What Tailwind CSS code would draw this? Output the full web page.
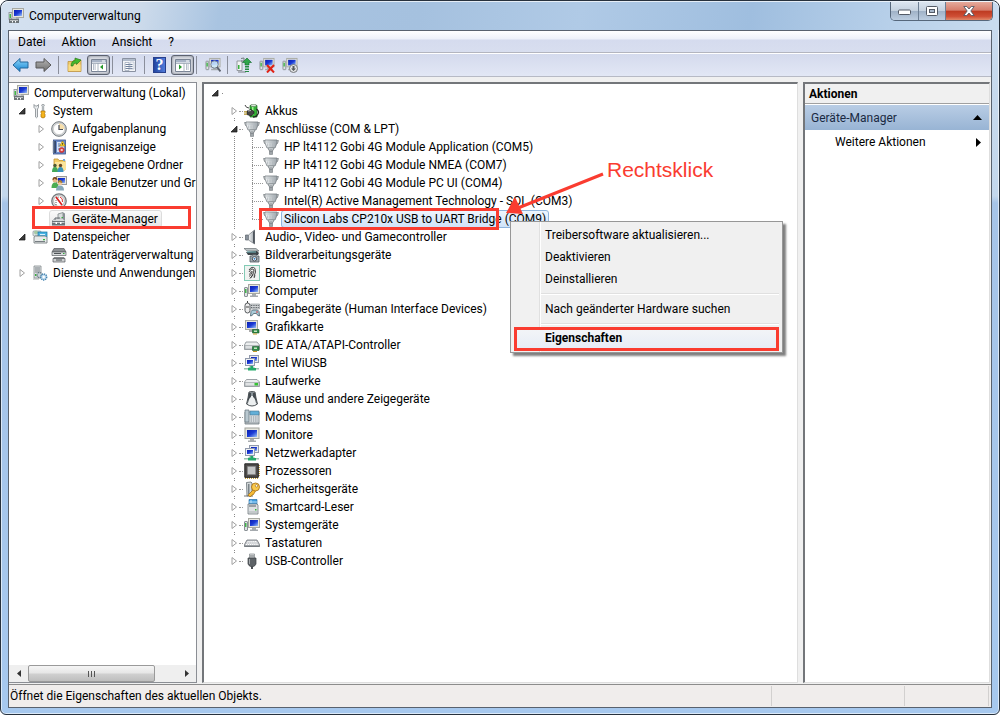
<!DOCTYPE html>
<html lang="de">
<head>
<meta charset="utf-8">
<meta name="viewport" content="width=device-width, initial-scale=1">
<title>Computerverwaltung</title>
<script src="https://cdn.jsdelivr.net/npm/@tailwindcss/browser@4"></script>
</head>
<body class="bg-white">

<svg class="absolute h-0 w-0" aria-hidden="true">
  <defs>
    <linearGradient id="screen" x1="0" y1="0" x2="1" y2="1"><stop offset="0" stop-color="#0a1fb0"/><stop offset=".5" stop-color="#1b3bd6"/><stop offset="1" stop-color="#9cc4f5"/></linearGradient>
    <linearGradient id="metal" x1="0" y1="0" x2="1" y2="0"><stop offset="0" stop-color="#f4f6f7"/><stop offset="1" stop-color="#9aa2a8"/></linearGradient>
    <linearGradient id="blueArrow" x1="0" y1="0" x2="0" y2="1"><stop offset="0" stop-color="#8fd8fb"/><stop offset="1" stop-color="#1483d2"/></linearGradient>
    <linearGradient id="grayArrow" x1="0" y1="0" x2="0" y2="1"><stop offset="0" stop-color="#b5b5b5"/><stop offset="1" stop-color="#6f6f6f"/></linearGradient>
    <symbol id="i-open" viewBox="0 0 8 8"><path d="M7 1v6H1z" fill="#3a3a3a" stroke="#111" stroke-width=".7"/></symbol>
    <symbol id="i-closed" viewBox="0 0 8 8"><path d="M2 .5v7L6.500 4z" fill="#fff" stroke="#a0a0a0"/></symbol>
    <symbol id="i-computer" viewBox="0 0 16 16"><rect x=".5" y="4.500" width="3" height="9" rx=".5" fill="#dfe3e5" stroke="#8b9196"/><path d="M1 6h1.500v4H1z" fill="#42b649"/><rect x="4.500" y="1.500" width="11" height="9" fill="#e6e6df" stroke="#a7a9a2"/><path d="M6 3h8v6H6z" fill="url(#screen)"/><path d="M8 11h4v1.500h2V14H6v-1.500h2z" fill="#a5aaae"/></symbol>
    <symbol id="i-manage" viewBox="0 0 16 16"><rect x="1" y="4.500" width="3" height="7" fill="#dfe3e5" stroke="#8b9196" stroke-width=".8"/><path d="M1.500 6H3v4H1.500z" fill="#42b649"/><rect x="4.500" y=".5" width="11" height="9" fill="#e6e6df" stroke="#a7a9a2"/><path d="M6 2h8v6H6z" fill="url(#screen)"/><path d="M1 10.500h10V15H1z" fill="#6d7478"/><path d="M4 9.500h4v1H4zM2 12h8v.8H2z" fill="#d7dadc"/><path d="M4 13h1v1.500H4zm3 0h1v1.500H7z" fill="#fff"/></symbol>
    <symbol id="i-tools" viewBox="0 0 16 16"><path d="M3.500 6 2 4.500V1.500L3.500 3h1.500L6.500 1.500v3L5.500 6v8q-1 1.500-2 0z" fill="#e7eaec" stroke="#81888d" stroke-width=".8"/><path d="M10 1.500h2l.5 1-.8 1V8h-1.400V3.500l-.8-1z" fill="#cbd0d3" stroke="#83898d" stroke-width=".6"/><path d="M9 8h4v1.500l-.6.8.6 1V14q-2 2-4 0v-2.700l.6-1-.6-.8z" fill="#f6b51c" stroke="#a9700a" stroke-width=".7"/></symbol>
    <symbol id="i-clock" viewBox="0 0 16 16"><circle cx="8" cy="8" r="7.300" fill="#d1d4d6" stroke="#73797d"/><circle cx="8" cy="8" r="5.600" fill="#fff" stroke="#b6b6b6" stroke-width=".5"/><path d="M8 8V2.500A5.500 5.500 0 0 1 13.500 8z" fill="#f6deaa"/><path d="M8 4v4.500h4" fill="none" stroke="#4a4f59" stroke-width="1.200"/></symbol>
    <symbol id="i-events" viewBox="0 0 16 16"><rect x="2.500" y="1" width="12" height="14" fill="#6c8ccb" stroke="#3f568d" stroke-width=".8"/><path d="M3 2h2v12H3z" fill="#34486f"/><path d="M1.500 3h2M1.500 5h2M1.500 7h2M1.500 9h2M1.500 11h2M1.500 13h2" stroke="#7d8896"/><path d="M6 3h7v10H6z" fill="#d6e2f4"/><path d="M7 5h2M7 7h2M7 10h2" stroke="#5877aa"/><path d="m11.500 2 2.800 5H8.700z" fill="#fbd42b" stroke="#a37a00" stroke-width=".6"/><path d="M11.500 4v1.800" stroke="#333" stroke-width=".8"/><circle cx="10.700" cy="11" r="2.600" fill="#e04343" stroke="#aa1d1d" stroke-width=".5"/><path d="m9.800 10 1.800 2m0-2-1.800 2" stroke="#fff" stroke-width=".8"/></symbol>
    <symbol id="i-share" viewBox="0 0 16 16"><path d="M3 2h4l1 1.500h6V13H3z" fill="#f3cd65" stroke="#c19234" stroke-width=".8"/><path d="M4 5h11v8H4z" fill="#fbe49b"/><path d="M12 2h2v2h-2z" fill="#72a9dc"/><circle cx="4" cy="8.500" r="1.700" fill="#4e5a34"/><circle cx="9.500" cy="8.500" r="1.700" fill="#6b4522"/><path d="M1 15q0-5 3-5t3 5z" fill="#43a857"/><path d="M6.500 15q0-5 3-5t3 5z" fill="#3b93bd"/></symbol>
    <symbol id="i-users" viewBox="0 0 16 16"><rect x="5.500" y="1.500" width="10" height="8" fill="#e8e8e0" stroke="#999"/><path d="M7 3h7v5H7z" fill="url(#screen)"/><circle cx="4" cy="5" r="2.500" fill="#e8b687"/><path d="M1.500 5Q1.500 1.700 4 2q2.500 0 2.500 3-2-.3-3-1.500Q3 5 1.500 5z" fill="#7b4a1d"/><path d="M.5 13q0-5.500 3.500-5.500T7.500 13z" fill="#4bad53"/><circle cx="9" cy="8" r="2.300" fill="#f0c9a1"/><path d="M6.700 8q0-3 2.300-3t2.300 3q-2 0-2.500-1-.8 1-2.100 1z" fill="#a98031"/><path d="M5 15.500q0-5 4-5t4 5z" fill="#87a9b9"/></symbol>
    <symbol id="i-perf" viewBox="0 0 16 16"><circle cx="8" cy="8" r="7.200" fill="#dedede" stroke="#74797d" stroke-width="1.300"/><circle cx="8" cy="8" r="5.400" fill="#fff" stroke="#999" stroke-width=".6"/><path d="M5 12V8q0-3 3-4" fill="none" stroke="#555" stroke-dasharray="1 1"/><path d="m5 4 6 8" stroke="#dc2222" stroke-width="1.700"/><path d="M9 4q3 1 2.500 5" fill="none" stroke="#d33"/></symbol>
    <symbol id="i-devmgr" viewBox="0 0 16 16"><path d="m7 3 5-1.500V8L7 9z" fill="#d9dddd" stroke="#7f8688" stroke-width=".8"/><path d="m12 1.500 2 1V9h-2z" fill="#899095"/><path d="M10.500 6h1.500v1h-1.500z" fill="#31ad3b"/><path d="m1 10 2-2h9l2 2z" fill="#eef0f1" stroke="#8b9194" stroke-width=".5"/><path d="M1 10h13v4.500H1z" fill="#6d7479"/><path d="M1.500 11h12v1h-12z" fill="#c4c9cc"/><path d="M4.500 11h1.500v2H4.500zm4.500 0h1.500v2H9z" fill="#fff"/><path d="M4 9V7h5" fill="none" stroke="#656b70"/></symbol>
    <symbol id="i-storage" viewBox="0 0 16 16"><rect x="1" y="2" width="8" height="5" rx="1" fill="#e1e7ea" stroke="#838c92" stroke-width=".7"/><circle cx="4" cy="3.500" r="2" fill="#a6c8a4"/><rect x="6" y="3" width="9" height="5" fill="#48b4e4" stroke="#16719f" stroke-width=".7"/><path d="M8 5h5v1H8z" fill="#d7f1ff"/><path d="m2 8 1.500-1h10l1.500 1.500V14H2z" fill="#e7e9e9" stroke="#6c7376" stroke-width=".8"/><path d="M3 12h10v1H3z" fill="#777e82"/><path d="M11 10h2v1.200h-2z" fill="#2bbd37"/></symbol>
    <symbol id="i-disks" viewBox="0 0 16 16"><path d="M3 1.500h10L15 5H1z" fill="#8c9093" stroke="#54585b" stroke-width=".7"/><path d="M1 5h14v3.500H1z" fill="#d9dcdd" stroke="#5c6164" stroke-width=".7"/><path d="M3 10h10l1 2H2z" fill="#85898c"/><path d="M2 11.500h12V15H2z" fill="#cfd2d3" stroke="#54585b" stroke-width=".7"/><path d="M3 6.500h7M5 13h6" stroke="#4f5457"/><path d="M12 6h1.500v1H12z" fill="#2dab37"/></symbol>
    <symbol id="i-services" viewBox="0 0 16 16"><path d="M2 1h7v12H2z" fill="#e2e5e7" stroke="#81888c" stroke-width=".8"/><path d="M3 3h5M3 5h5M3 7h5" stroke="#747c81"/><path d="M3 9h1.500v2H3z" fill="#37ad3d"/><circle cx="7.500" cy="10" r="2.500" fill="#cad3d9" stroke="#64747f" stroke-width="1.300" stroke-dasharray="1.200 .8"/><circle cx="11.700" cy="12" r="3" fill="#b9d7ed" stroke="#4483af" stroke-width="1.400" stroke-dasharray="1.200 .8"/><circle cx="11.700" cy="12" r="1.200" fill="#fff"/><path d="M1 14h6" stroke="#a8adaf"/></symbol>
    <symbol id="i-battery" viewBox="0 0 16 16"><path d="M6 2.500h7V14H6z" fill="#35b237" stroke="#1c6c20" stroke-width=".7"/><path d="M7 1.500h5v2H7z" fill="#d9e7d9" stroke="#587759" stroke-width=".5"/><path d="M8 4h1.500v8H8z" fill="#a4ef93"/><path d="M12.500 6q3 2 1.500 5t-5 3" fill="none" stroke="#222" stroke-width="1.300"/><path d="M1 2q1 3 4 3" fill="none" stroke="#444"/><path d="m3 8 4-1.500 3 2v2l-3 2.500-4-1.500z" fill="#454545" stroke="#161616" stroke-width=".6"/><path d="M0 8.800h3M0 11.200h3" stroke="#b08f25" stroke-width="1.200"/><path d="m4 8 3-.5" stroke="#bbb"/></symbol>
    <symbol id="i-port" viewBox="0 0 16 16"><path d="M.5 1.500h2v3h-1zM15.500 1.500h-2v3h1z" fill="#d5d8da" stroke="#787e82" stroke-width=".7"/><path d="M2 1h12v3l-2 5H4L2 4z" fill="url(#metal)" stroke="#777e83" stroke-width=".8"/><path d="M3 3h10M4.500 4.500v3M7 4.500v3M9.500 4.500v3M11.500 4.500v3" stroke="#b0b7bb" stroke-width=".7"/><path d="M5.500 9h5v2h-5z" fill="#e9ecee" stroke="#7d8488" stroke-width=".7"/><path d="M6.500 11h3v4.500h-3z" fill="#b8bec1" stroke="#737a7e" stroke-width=".6"/><path d="M6.500 12.500h3m-3 1.500h3" stroke="#555b60" stroke-width=".5"/></symbol>
    <symbol id="i-sound" viewBox="0 0 16 16"><path d="M1.500 6h3v5h-3z" fill="#8a929b" stroke="#59616a" stroke-width=".7"/><path d="m4.500 6 6-5v14l-6-4z" fill="url(#metal)" stroke="#71777e" stroke-width=".7"/><path d="m9 3 1.800-2v14L9 13.500z" fill="#4f565e"/></symbol>
    <symbol id="i-imaging" viewBox="0 0 16 16"><path d="M0 1.500h12l3 2.500H3z" fill="#bfc5c7" stroke="#596165" stroke-width=".6"/><path d="m2 5 11-1 2 2-1 2H4z" fill="#3d4449"/><path d="M3 5h9" stroke="#70b5bb"/><path d="M6 9h2l.8-1.500h3L12.500 9H15v6H6z" fill="#a1a8ad" stroke="#525a60" stroke-width=".8"/><circle cx="10.500" cy="11.800" r="2.200" fill="#fff" stroke="#47505a"/><circle cx="10.500" cy="11.800" r="1" fill="#3079bb"/></symbol>
    <symbol id="i-finger" viewBox="0 0 16 16"><rect x=".5" y=".5" width="15" height="15" fill="#f0f3f1" stroke="#83cbb5"/><path d="M5 5q3-4.500 6-1.500 1.500 3-1 8M5 7q2-4 4-3t-.5 6l-2 3M5 9.500q2-1 2.500-3.500M5 11.500q2.500-1.500 3.500-5M6 13.500q2-2 3-4M10 13l1-2.500" fill="none" stroke="#333" stroke-width=".9"/></symbol>
    <symbol id="i-hid" viewBox="0 0 16 16"><rect x="1" y="2" width="5" height="10" rx="2.500" fill="#ececec" stroke="#55595c"/><path d="M3.500 2V0M2 6h3" stroke="#444"/><path d="M6.500 3h9v5h-9z" fill="#d0d3d5" stroke="#8b9194" stroke-width=".6"/><path d="M7 4.500h8M7 6.500h8" stroke="#60676b" stroke-dasharray="1 .7"/><path d="M6.500 15q0-6 2-6h5q2 0 2 6-2 0-3-2.500h-3q-1 2.500-3 2.500z" fill="#a8cbd9" stroke="#4b5e69" stroke-width=".8"/><circle cx="13" cy="11" r=".8" fill="#d22"/></symbol>
    <symbol id="i-gpu" viewBox="0 0 16 16"><rect x="1.500" y="1.500" width="12" height="9" fill="#e4e4dd" stroke="#a8aaa5"/><path d="M3 3h9v6H3z" fill="url(#screen)"/><path d="M5 11h5v2H5z" fill="#aaa"/><path d="M8.500 10.500H15V14H8.500z" fill="#2e8c48" stroke="#175629" stroke-width=".6"/><path d="M10 11.500h3V13h-3z" fill="#c8e2c1"/><path d="M9 15h4" stroke="#c69b29"/></symbol>
    <symbol id="i-ide" viewBox="0 0 16 16"><path d="M2 5h11l2.500 3v4.500H.5V8z" fill="#eceeef" stroke="#858c90" stroke-width=".8"/><path d="M1 8.500h14V12H1z" fill="#dde0e2" stroke="#9da3a6" stroke-width=".7"/><path d="M8.500 9.500H15v4H8.500z" fill="#2e8c48" stroke="#175629" stroke-width=".6"/><path d="M10 10.500h3V12h-3z" fill="#c8e2c1"/><path d="M9 14.500h4" stroke="#c69b29"/></symbol>
    <symbol id="i-net" viewBox="0 0 16 16"><rect x="5.500" y=".5" width="9" height="7" fill="#e9eaf0" stroke="#929bad"/><path d="M7 2h6v4H7z" fill="url(#screen)"/><rect x="1.500" y="3.500" width="9" height="7" fill="#eff1f4" stroke="#929bad"/><path d="M3 5h6v4H3z" fill="url(#screen)"/><path d="M0 13h4l2-2h3l2 2h4v1.500H0z" fill="#9ec4b0"/><path d="M6.500 11H9v2h3v2.500H4V13h2.500z" fill="#23aa69"/></symbol>
    <symbol id="i-drive" viewBox="0 0 16 16"><path d="M2.500 6.500h10.500l2.500 2.500v4.500H.5V9z" fill="#eceeef" stroke="#858c90" stroke-width=".8"/><path d="M1 9.500h14V13H1z" fill="#dfe2e4" stroke="#9da3a6" stroke-width=".7"/><path d="M10.500 10h3.500v2.500h-3.500z" fill="#36c334"/></symbol>
    <symbol id="i-mouse" viewBox="0 0 16 16"><path d="M5 1q3-1 6 0l1 6 1.500 6q-5.500 4-11 0L4 7z" fill="#eceff0" stroke="#4d5357"/><path d="M5 1.500h2V6q-2 1-3 6l-1 1 1-6zM11 1.500H9V6q2 1 3 6l1 1-1-6z" fill="#444b50"/><path d="M8 1v4" stroke="#657078" stroke-width="1.500"/></symbol>
    <symbol id="i-modem" viewBox="0 0 16 16"><path d="M1 3h14v12H1z" fill="#e1e6e9" stroke="#6f7b82" stroke-width=".8"/><path d="M1 1h4v12H1z" fill="#b9c8d0" stroke="#64737d" stroke-width=".7"/><path d="M6 2h9v4H6z" fill="#62afd8" stroke="#49748d" stroke-width=".6"/><path d="M6.500 8H14M6.500 10H14M6.500 12H14" stroke="#7f8a92" stroke-dasharray="1.500 .8"/><path d="M1 14h14" stroke="#7e888e"/></symbol>
    <symbol id="i-monitor" viewBox="0 0 16 16"><rect x="1" y="1" width="14" height="10.500" fill="#e5e5dd" stroke="#a0a29c"/><path d="M3 3h10v7H3z" fill="url(#screen)"/><path d="M6 12h4v1.500h2V15H4v-1.500h2z" fill="#a9adb0"/></symbol>
    <symbol id="i-cpu" viewBox="0 0 16 16"><path d="M1 15h13M15 2v12" stroke="#c5a03b" stroke-width="1.800" stroke-dasharray="1 1"/><path d="M.8.800h13.500v13.500H.8z" fill="#4e4c4a" stroke="#242424"/><path d="M3.500 3.500h8v8h-8z" fill="#c4c6c6" stroke="#8a8a8a" stroke-width=".6"/></symbol>
    <symbol id="i-key" viewBox="0 0 16 16"><path d="M2.500 1.500 7 1l1 1v12l-5 1z" fill="#d4d9db" stroke="#656e73" stroke-width=".8"/><path d="M4 3h1.500v10H4z" fill="#7a8388"/><path d="M0 15h9" stroke="#777"/><path d="M9.500 8.500 4 14l1.500 1.500H7l1-1.500 1.500-.5 2-3.500" fill="#f5b934" stroke="#9b670b" stroke-width=".7"/><circle cx="11.500" cy="6" r="4" fill="#f9c94d" stroke="#a36a0f" stroke-width=".8"/><circle cx="12.500" cy="4.800" r="1.200" fill="#fff" stroke="#93610e" stroke-width=".6"/></symbol>
    <symbol id="i-smartcard" viewBox="0 0 16 16"><path d="M5 .5h8V6H5z" fill="#3e9cdf" stroke="#19639c" stroke-width=".6"/><path d="M7 1v3M5 3h8" stroke="#d3efff" stroke-width=".8"/><path d="M4 5h9l1 1v9H4z" fill="#dde1e3" stroke="#727a7e" stroke-width=".8"/><path d="M5 7h7" stroke="#596166"/><path d="M11 10h1.500v1.500H11z" fill="#38b63b"/><path d="M5 13h8" stroke="#aab1b4"/></symbol>
    <symbol id="i-keyboard" viewBox="0 0 16 16"><path d="M3 5h10l2.500 4.500v2H.5v-2z" fill="#c4c7cb" stroke="#6e7378" stroke-width=".8"/><path d="M3.500 6.500h9M2.800 8h10.500M2 9.500h12" stroke="#fff" stroke-dasharray="1.200 .7"/><path d="M.5 10.500h15v1.500H.5z" fill="#777c81"/></symbol>
    <symbol id="i-usb" viewBox="0 0 16 16"><path d="M5.500 1h5v4h-5z" fill="#e5e7e8" stroke="#8b9093" stroke-width=".8"/><path d="M6.500 2h1v2h-1zm2 0h1v2h-1z" fill="#6b7074"/><path d="M4 5h8v6q-1 2-2.500 2.500h-3Q5 13 4 11z" fill="#5e6367" stroke="#3b3f43" stroke-width=".7"/><path d="M5.500 6v5" stroke="#a5a9ac"/><path d="M7 13h2v3H7z" fill="#4b4f53"/></symbol>
  </defs>
</svg>

<div class="flex min-h-screen flex-col rounded-t-lg rounded-b-md border border-[#27313d] bg-[linear-gradient(180deg,#c9dbee_0px,#c3d7ec_195px,#a6c4e8_202px,#a6c8ee_100%)] px-[7px] pb-[6px] font-[Roboto,'Open_Sans',sans-serif] text-xs text-black ring-1 ring-inset ring-white/60">

  <header class="-mx-[7px] flex h-[29px] items-start justify-between rounded-t-lg border-t border-white/70 bg-[linear-gradient(100deg,#d4e1f0_0%,#cddbeb_14%,#a9c4e1_22%,#a5c1df_42%,#b0cae6_58%,#9fbedf_75%,#b9d1ea_90%,#c9dcef_100%)] pl-[7px]">
    <div class="flex h-[27px] items-center gap-[5px]">
      <svg class="size-4"><use href="#i-manage"/></svg>
      <h1>Computerverwaltung</h1>
    </div>
    <div class="mr-[6px] flex h-[19px] overflow-hidden rounded-b-[5px] border border-t-0 border-[#56677b]">
      <button aria-label="Minimieren" class="flex w-7 items-center justify-center border-r border-[#6d7f94] bg-[linear-gradient(#dbe5f0_0%,#c4d1df_48%,#9fb1c6_50%,#bccde0_100%)]"><svg class="h-[7px] w-[13px]" viewBox="0 0 13 7"><rect x=".5" y="2" width="12" height="4.500" rx="1" fill="#fff" stroke="#535a66"/></svg></button>
      <button aria-label="Maximieren" class="flex w-[27px] items-center justify-center border-r border-[#6d7f94] bg-[linear-gradient(#dbe5f0_0%,#c4d1df_48%,#9fb1c6_50%,#bccde0_100%)]"><svg class="h-[10px] w-[12px]" viewBox="0 0 12 10"><rect x=".5" y=".5" width="11" height="9" rx="1" fill="#fff" stroke="#535a66"/><rect x="3.500" y="3.500" width="5" height="3" fill="#a9b9cc" stroke="#535a66"/></svg></button>
      <button aria-label="Schließen" class="flex w-[46px] items-center justify-center bg-[linear-gradient(#e5aa9c_0%,#d67d6b_46%,#bd3a21_50%,#cf4f35_80%,#e08a6b_100%)]"><svg class="h-[10px] w-[12px]" viewBox="0 0 12 10"><path d="M.8.500h3L6 3 8.200.500h3L7.800 5l3.400 4.500h-3L6 7 3.800 9.500h-3L4.200 5z" fill="#fff" stroke="#535a66" stroke-width=".9"/></svg></button>
    </div>
  </header>

  <div class="flex grow flex-col border border-[#59626e] bg-[#f0f0f0]">
    <nav class="flex h-[22px] items-center gap-4 border-b border-[#b3b5bf] bg-[linear-gradient(#ffffff_0px,#eef1f9_8px,#d5dbee_9px,#d8deef_100%)] pl-[9px]">
      <button>Datei</button><button>Aktion</button><button>Ansicht</button><button>?</button>
    </nav>
    <div class="flex h-6 items-center border-y border-t-white border-b-[#b7bac5] bg-[linear-gradient(#d4daed,#e2e7f5)] pl-[3px]" role="toolbar" aria-label="Symbolleiste">
      <button aria-label="Zurück" class="mr-[6px]"><svg class="h-4 w-[17px]" viewBox="0 0 17 16"><path d="M1 8 8 1.500V5h8v6H8v3.500z" fill="url(#blueArrow)" stroke="#24669b"/></svg></button>
      <button aria-label="Vorwärts"><svg class="h-4 w-[17px]" viewBox="0 0 17 16"><path d="M16 8 9 1.500V5H1v6h8v3.500z" fill="url(#grayArrow)" stroke="#595959"/></svg></button>
      <span class="mx-[6px] h-[18px] w-px bg-[#8b8f9b]"></span>
      <button aria-label="Übergeordneter Ordner" class="ml-[2px] mr-[4px]"><svg class="size-4" viewBox="0 0 16 16"><path d="M1 4.500h5l1-1.500h7v11.500H1z" fill="#f1cd6c" stroke="#bc923f" stroke-width=".8"/><path d="M1.500 7.500h12v6.500h-12z" fill="#f9dc86"/><path d="M4 9q0-5 4-5.500V1l6 2-4.500 4.500V6Q6 6 6 9z" fill="#43b92d" stroke="#227014" stroke-width=".6"/></svg></button>
      <button aria-label="Konsolenstruktur anzeigen" aria-pressed="true" class="flex h-[20px] w-[23px] items-center justify-center rounded-[3px] border border-[#5c6270] bg-[#dadde4] shadow-[inset_0_0_3px_#777d89]"><svg class="h-[13px] w-4" viewBox="0 0 16 13"><path d="M.5.500h15v12H.5z" fill="#fff" stroke="#7a8495"/><path d="M1 1h14v2.500H1z" fill="#a7b3c6"/><path d="M11 2h3" stroke="#fff"/><path d="M1 4.500h14M7 4v8.500" stroke="#98a3b3" stroke-width=".8"/><path d="M2 6h3M2 8h3M2 10h3" stroke="#6f7f98" stroke-dasharray="1 .6"/><path d="M12 5.500v5L9 8z" fill="#27992d"/></svg></button>
      <span class="mr-[8px] ml-[2px] h-[18px] w-px bg-[#8b8f9b]"></span>
      <button aria-label="Eigenschaften"><svg class="size-4" viewBox="0 0 16 16"><path d="M1.500 1.500h13v13h-13z" fill="#f3f5f8" stroke="#8991a1"/><path d="M2 2h12v2H2z" fill="#b1bccc"/><path d="M4 5.500h4v8H4z" fill="#fff" stroke="#8794aa" stroke-width=".6"/><path d="M4.500 7.500h7M4.500 9.500h7M4.500 11.500h7" stroke="#71839d"/><path d="M9 5h4v7H9z" fill="none" stroke="#9eabc0" stroke-width=".5"/></svg></button>
      <span class="mx-[7px] h-[18px] w-px bg-[#8b8f9b]"></span>
      <button aria-label="Hilfe" class="mr-[5px] ml-px flex h-4 w-[13px] items-center justify-center border border-[#28408c] bg-[linear-gradient(90deg,#2145a0,#527cdb)] font-['Liberation_Serif',serif] text-base leading-none font-bold text-white">?</button>
      <button aria-label="Aktionsbereich anzeigen" aria-pressed="true" class="flex h-[20px] w-[23px] items-center justify-center rounded-[3px] border border-[#5c6270] bg-[#dadde4] shadow-[inset_0_0_3px_#777d89]"><svg class="h-[13px] w-4" viewBox="0 0 16 13"><path d="M.5.500h15v12H.5z" fill="#fff" stroke="#7a8495"/><path d="M1 1h14v2.500H1z" fill="#a7b3c6"/><path d="M11 2h3" stroke="#fff"/><path d="M1 4.500h14M9 4v8.500" stroke="#98a3b3" stroke-width=".8"/><path d="M11 6h3M11 8h3M11 10h3" stroke="#6f7f98" stroke-dasharray="1 .6"/><path d="M4 5.500v5L7 8z" fill="#27992d"/></svg></button>
      <span class="mr-[8px] ml-[2px] h-[18px] w-px bg-[#8b8f9b]"></span>
      <button aria-label="Nach geänderter Hardware suchen"><svg class="size-4" viewBox="0 0 16 16"><use href="#i-computer" width="16" height="15"/><circle cx="9.500" cy="7.500" r="3.700" fill="#d2edfb" fill-opacity=".85" stroke="#7c8794"/><path d="m12 10 3.500 4.500" stroke="#5c636d" stroke-width="2"/></svg></button>
      <span class="mr-[8px] ml-[6px] h-[18px] w-px bg-[#8b8f9b]"></span>
      <button aria-label="Treibersoftware aktualisieren" class="mr-[7px]"><svg class="size-4" viewBox="0 0 16 16"><path d="M1 4h5v9.500H1z" fill="#f2f4f5" stroke="#81888c" stroke-width=".8"/><path d="M5 1.500 8 1v3H5M2 15h8" fill="none" stroke="#767d81"/><path d="M2 8h1.500v4H2z" fill="#36b23d"/><path d="m11 1 4.500 4.500H13V8H9V5.500H6.500z" fill="#30a64b" stroke="#0d6827" stroke-width=".6"/><path d="M9 9h4v1.500H9zm0 2.500h4V13H9zm0 2.500h4v1H9z" fill="#278c43"/></svg></button>
      <button aria-label="Deinstallieren" class="mr-[7px]"><svg class="size-4" viewBox="0 0 16 16"><use href="#i-computer" width="16" height="15"/><path d="m8 8 7 7.500M15 8l-7 7.500" stroke="#e02316" stroke-width="2"/></svg></button>
      <button aria-label="Deaktivieren"><svg class="size-4" viewBox="0 0 16 16"><use href="#i-computer" width="16" height="15"/><circle cx="11.500" cy="11.500" r="4" fill="#e4e5e6" stroke="#75797c"/><path d="M10.500 9h2v2.500H14L11.500 14 9 11.500h1.500z" fill="#55595c"/></svg></button>
    </div>

    <main class="flex grow gap-[5px] pt-[5px] pr-px pb-px">
      <aside class="flex w-[188px] shrink-0 flex-col border border-l-0 border-[#8b8e94] bg-white" aria-label="Konsolenstruktur">
        <ul class="grow pt-px leading-[18px] whitespace-nowrap">
          <li class="flex h-[18px] items-center gap-[5px] pl-1"><svg class="size-4"><use href="#i-manage"/></svg>Computerverwaltung (Lokal)</li>
          <li class="flex h-[18px] items-center pl-[9px]"><button aria-label="System reduzieren" class="mr-[6px]"><svg class="size-2"><use href="#i-open"/></svg></button><svg class="mr-[5px] size-4"><use href="#i-tools"/></svg>System</li>
          <li>
            <ul class="overflow-hidden">
              <li class="flex h-[18px] items-center pl-7"><button aria-label="Aufgabenplanung erweitern" class="mr-[6px]"><svg class="size-2"><use href="#i-closed"/></svg></button><svg class="mr-[5px] size-4 shrink-0"><use href="#i-clock"/></svg>Aufgabenplanung</li>
              <li class="flex h-[18px] items-center pl-7"><button aria-label="Ereignisanzeige erweitern" class="mr-[6px]"><svg class="size-2"><use href="#i-closed"/></svg></button><svg class="mr-[5px] size-4 shrink-0"><use href="#i-events"/></svg>Ereignisanzeige</li>
              <li class="flex h-[18px] items-center pl-7"><button aria-label="Freigegebene Ordner erweitern" class="mr-[6px]"><svg class="size-2"><use href="#i-closed"/></svg></button><svg class="mr-[5px] size-4 shrink-0"><use href="#i-share"/></svg>Freigegebene Ordner</li>
              <li class="flex h-[18px] items-center pl-7"><button aria-label="Lokale Benutzer und Gruppen erweitern" class="mr-[6px]"><svg class="size-2"><use href="#i-closed"/></svg></button><svg class="mr-[5px] size-4 shrink-0"><use href="#i-users"/></svg>Lokale Benutzer und Gru</li>
              <li class="flex h-[18px] items-center pl-7"><button aria-label="Leistung erweitern" class="mr-[6px]"><svg class="size-2"><use href="#i-closed"/></svg></button><svg class="mr-[5px] size-4 shrink-0"><use href="#i-perf"/></svg>Leistung</li>
            </ul>
          </li>
          <li class="relative flex h-[18px] items-center pl-10" aria-selected="true">
            <span class="flex h-[18px] items-center rounded-[3px] border border-[#dcdcdc] bg-[linear-gradient(#fafafa,#e6e6e6)] pr-[3px]"><svg class="mr-[5px] ml-px size-4"><use href="#i-devmgr"/></svg>Geräte-Manager</span>
            <span class="absolute -top-[4px] right-[5px] left-[23px] h-[23px] border-[3px] border-[#fa3c30]"></span>
          </li>
          <li class="flex h-[18px] items-center pl-[9px]"><button aria-label="Datenspeicher reduzieren" class="mr-[6px]"><svg class="size-2"><use href="#i-open"/></svg></button><svg class="mr-[5px] size-4"><use href="#i-storage"/></svg>Datenspeicher</li>
          <li class="flex h-[18px] items-center overflow-hidden pl-[42px]"><svg class="mr-[5px] size-4 shrink-0"><use href="#i-disks"/></svg>Datenträgerverwaltung</li>
          <li class="flex h-[18px] items-center overflow-hidden pl-[9px]"><button aria-label="Dienste und Anwendungen erweitern" class="mr-[6px]"><svg class="size-2"><use href="#i-closed"/></svg></button><svg class="mr-[5px] size-4 shrink-0"><use href="#i-services"/></svg>Dienste und Anwendungen</li>
        </ul>
        <div class="flex h-[17px] items-stretch bg-[#efefef]">
          <button aria-label="Nach links" class="flex w-[19px] items-center justify-center"><svg class="h-[7px] w-1" viewBox="0 0 4 7"><path d="M4 0v7L0 3.500z" fill="#333"/></svg></button>
          <div class="flex w-[127px] items-center justify-center gap-[2px] rounded-xs border border-[#9a9a9a] bg-[linear-gradient(#f5f5f5_0%,#e6e6e6_48%,#d0d0d0_52%,#bebebe_100%)]"><i class="h-[6px] w-px bg-[#555]"></i><i class="h-[6px] w-px bg-[#555]"></i><i class="h-[6px] w-px bg-[#555]"></i></div>
          <button aria-label="Nach rechts" class="ml-auto flex w-[19px] items-center justify-center"><svg class="h-[7px] w-1" viewBox="0 0 4 7"><path d="M0 0v7l4-3.500z" fill="#333"/></svg></button>
        </div>
      </aside>

      <section class="relative min-w-0 grow border-t-2 border-r border-b border-l-2 border-t-[#73767a] border-r-[#dedede] border-b-[#dedede] border-l-[#73767a] bg-white pl-1 leading-[18px] whitespace-nowrap" aria-label="Geräte">
        <div class="flex h-[18px] items-center gap-[3px] pl-[3px]"><button aria-label="Computer reduzieren"><svg class="size-2"><use href="#i-open"/></svg></button><i class="h-px w-px bg-[#888]"></i></div>
        <ul class="relative ml-[22px]">
          <li class="absolute top-2 bottom-2 left-[4px] w-px bg-[repeating-linear-gradient(#8a8a8a_0px,#8a8a8a_1px,transparent_1px,transparent_2px)]" aria-hidden="true"></li>
          <li class="relative flex h-[18px] items-center"><button aria-label="Akkus erweitern" class="flex h-[14px] items-center bg-white"><svg class="size-2"><use href="#i-closed"/></svg></button><i class="mr-px ml-px w-[4px] border-t border-dotted border-[#999]"></i><svg class="mr-[5px] size-4"><use href="#i-battery"/></svg>Akkus</li>
          <li class="relative flex h-[18px] items-center"><button aria-label="Anschlüsse reduzieren" class="flex h-[14px] items-center bg-white"><svg class="size-2"><use href="#i-open"/></svg></button><i class="mr-px ml-px w-[4px] border-t border-dotted border-[#999]"></i><svg class="mr-[5px] size-4"><use href="#i-port"/></svg>Anschlüsse (COM &amp; LPT)</li>
          <li>
            <ul class="relative ml-[22px]">
              <li class="absolute top-0 bottom-2 left-0 w-px bg-[repeating-linear-gradient(#8a8a8a_0px,#8a8a8a_1px,transparent_1px,transparent_2px)]" aria-hidden="true"></li>
              <li class="flex h-[18px] items-center"><i class="w-[11px] border-t border-dotted border-[#999]"></i><svg class="mr-[5px] size-4"><use href="#i-port"/></svg>HP lt4112 Gobi 4G Module Application (COM5)</li>
              <li class="flex h-[18px] items-center"><i class="w-[11px] border-t border-dotted border-[#999]"></i><svg class="mr-[5px] size-4"><use href="#i-port"/></svg>HP lt4112 Gobi 4G Module NMEA (COM7)</li>
              <li class="flex h-[18px] items-center"><i class="w-[11px] border-t border-dotted border-[#999]"></i><svg class="mr-[5px] size-4"><use href="#i-port"/></svg>HP lt4112 Gobi 4G Module PC UI (COM4)</li>
              <li class="flex h-[18px] items-center"><i class="w-[11px] border-t border-dotted border-[#999]"></i><svg class="mr-[5px] size-4"><use href="#i-port"/></svg>Intel(R) Active Management Technology - SOL (COM3)</li>
              <li class="relative flex h-[18px] items-center" aria-selected="true"><i class="w-[11px] border-t border-dotted border-[#999]"></i><svg class="mr-[2px] size-4"><use href="#i-port"/></svg><span class="rounded-[3px] border border-[#8fb4dc] bg-[linear-gradient(#eef5fd,#cfe3f9)] px-[2px] leading-4">Silicon Labs CP210x USB to UART Bridge (COM9)</span>
                <span class="absolute -top-[2px] left-[7px] h-[22px] w-[240px] border-[3px] border-[#fa3c30]"></span></li>
            </ul>
          </li>
          <li class="relative flex h-[18px] items-center"><button aria-label="Audio erweitern" class="flex h-[14px] items-center bg-white"><svg class="size-2"><use href="#i-closed"/></svg></button><i class="mr-px ml-px w-[4px] border-t border-dotted border-[#999]"></i><svg class="mr-[5px] size-4"><use href="#i-sound"/></svg>Audio-, Video- und Gamecontroller</li>
          <li class="relative flex h-[18px] items-center"><button aria-label="Bildverarbeitungsgeräte erweitern" class="flex h-[14px] items-center bg-white"><svg class="size-2"><use href="#i-closed"/></svg></button><i class="mr-px ml-px w-[4px] border-t border-dotted border-[#999]"></i><svg class="mr-[5px] size-4"><use href="#i-imaging"/></svg>Bildverarbeitungsgeräte</li>
          <li class="relative flex h-[18px] items-center"><button aria-label="Biometric erweitern" class="flex h-[14px] items-center bg-white"><svg class="size-2"><use href="#i-closed"/></svg></button><i class="mr-px ml-px w-[4px] border-t border-dotted border-[#999]"></i><svg class="mr-[5px] size-4"><use href="#i-finger"/></svg>Biometric</li>
          <li class="relative flex h-[18px] items-center"><button aria-label="Computer erweitern" class="flex h-[14px] items-center bg-white"><svg class="size-2"><use href="#i-closed"/></svg></button><i class="mr-px ml-px w-[4px] border-t border-dotted border-[#999]"></i><svg class="mr-[5px] size-4"><use href="#i-computer"/></svg>Computer</li>
          <li class="relative flex h-[18px] items-center"><button aria-label="Eingabegeräte erweitern" class="flex h-[14px] items-center bg-white"><svg class="size-2"><use href="#i-closed"/></svg></button><i class="mr-px ml-px w-[4px] border-t border-dotted border-[#999]"></i><svg class="mr-[5px] size-4"><use href="#i-hid"/></svg>Eingabegeräte (Human Interface Devices)</li>
          <li class="relative flex h-[18px] items-center"><button aria-label="Grafikkarte erweitern" class="flex h-[14px] items-center bg-white"><svg class="size-2"><use href="#i-closed"/></svg></button><i class="mr-px ml-px w-[4px] border-t border-dotted border-[#999]"></i><svg class="mr-[5px] size-4"><use href="#i-gpu"/></svg>Grafikkarte</li>
          <li class="relative flex h-[18px] items-center"><button aria-label="IDE erweitern" class="flex h-[14px] items-center bg-white"><svg class="size-2"><use href="#i-closed"/></svg></button><i class="mr-px ml-px w-[4px] border-t border-dotted border-[#999]"></i><svg class="mr-[5px] size-4"><use href="#i-ide"/></svg>IDE ATA/ATAPI-Controller</li>
          <li class="relative flex h-[18px] items-center"><button aria-label="Intel WiUSB erweitern" class="flex h-[14px] items-center bg-white"><svg class="size-2"><use href="#i-closed"/></svg></button><i class="mr-px ml-px w-[4px] border-t border-dotted border-[#999]"></i><svg class="mr-[5px] size-4"><use href="#i-net"/></svg>Intel WiUSB</li>
          <li class="relative flex h-[18px] items-center"><button aria-label="Laufwerke erweitern" class="flex h-[14px] items-center bg-white"><svg class="size-2"><use href="#i-closed"/></svg></button><i class="mr-px ml-px w-[4px] border-t border-dotted border-[#999]"></i><svg class="mr-[5px] size-4"><use href="#i-drive"/></svg>Laufwerke</li>
          <li class="relative flex h-[18px] items-center"><button aria-label="Mäuse erweitern" class="flex h-[14px] items-center bg-white"><svg class="size-2"><use href="#i-closed"/></svg></button><i class="mr-px ml-px w-[4px] border-t border-dotted border-[#999]"></i><svg class="mr-[5px] size-4"><use href="#i-mouse"/></svg>Mäuse und andere Zeigegeräte</li>
          <li class="relative flex h-[18px] items-center"><button aria-label="Modems erweitern" class="flex h-[14px] items-center bg-white"><svg class="size-2"><use href="#i-closed"/></svg></button><i class="mr-px ml-px w-[4px] border-t border-dotted border-[#999]"></i><svg class="mr-[5px] size-4"><use href="#i-modem"/></svg>Modems</li>
          <li class="relative flex h-[18px] items-center"><button aria-label="Monitore erweitern" class="flex h-[14px] items-center bg-white"><svg class="size-2"><use href="#i-closed"/></svg></button><i class="mr-px ml-px w-[4px] border-t border-dotted border-[#999]"></i><svg class="mr-[5px] size-4"><use href="#i-monitor"/></svg>Monitore</li>
          <li class="relative flex h-[18px] items-center"><button aria-label="Netzwerkadapter erweitern" class="flex h-[14px] items-center bg-white"><svg class="size-2"><use href="#i-closed"/></svg></button><i class="mr-px ml-px w-[4px] border-t border-dotted border-[#999]"></i><svg class="mr-[5px] size-4"><use href="#i-net"/></svg>Netzwerkadapter</li>
          <li class="relative flex h-[18px] items-center"><button aria-label="Prozessoren erweitern" class="flex h-[14px] items-center bg-white"><svg class="size-2"><use href="#i-closed"/></svg></button><i class="mr-px ml-px w-[4px] border-t border-dotted border-[#999]"></i><svg class="mr-[5px] size-4"><use href="#i-cpu"/></svg>Prozessoren</li>
          <li class="relative flex h-[18px] items-center"><button aria-label="Sicherheitsgeräte erweitern" class="flex h-[14px] items-center bg-white"><svg class="size-2"><use href="#i-closed"/></svg></button><i class="mr-px ml-px w-[4px] border-t border-dotted border-[#999]"></i><svg class="mr-[5px] size-4"><use href="#i-key"/></svg>Sicherheitsgeräte</li>
          <li class="relative flex h-[18px] items-center"><button aria-label="Smartcard-Leser erweitern" class="flex h-[14px] items-center bg-white"><svg class="size-2"><use href="#i-closed"/></svg></button><i class="mr-px ml-px w-[4px] border-t border-dotted border-[#999]"></i><svg class="mr-[5px] size-4"><use href="#i-smartcard"/></svg>Smartcard-Leser</li>
          <li class="relative flex h-[18px] items-center"><button aria-label="Systemgeräte erweitern" class="flex h-[14px] items-center bg-white"><svg class="size-2"><use href="#i-closed"/></svg></button><i class="mr-px ml-px w-[4px] border-t border-dotted border-[#999]"></i><svg class="mr-[5px] size-4"><use href="#i-computer"/></svg>Systemgeräte</li>
          <li class="relative flex h-[18px] items-center"><button aria-label="Tastaturen erweitern" class="flex h-[14px] items-center bg-white"><svg class="size-2"><use href="#i-closed"/></svg></button><i class="mr-px ml-px w-[4px] border-t border-dotted border-[#999]"></i><svg class="mr-[5px] size-4"><use href="#i-keyboard"/></svg>Tastaturen</li>
          <li class="relative flex h-[18px] items-center"><button aria-label="USB-Controller erweitern" class="flex h-[14px] items-center bg-white"><svg class="size-2"><use href="#i-closed"/></svg></button><i class="mr-px ml-px w-[4px] border-t border-dotted border-[#999]"></i><svg class="mr-[5px] size-4"><use href="#i-usb"/></svg>USB-Controller</li>
        </ul>

        <svg class="absolute top-[84px] left-[300px] h-[48px] w-[104px]" viewBox="0 0 104 48" aria-hidden="true"><path d="M99 6 14 40" stroke="#fa3c30" stroke-width="3"/><path d="m2 45 9-16 8 17z" fill="#fa3c30"/></svg>
        <p class="absolute top-[74px] left-[403px] font-['Liberation_Sans',sans-serif] text-[21px] leading-6 text-[#fa3c30]">Rechtsklick</p>

        <div role="menu" class="absolute top-[137px] left-[306px] flex w-[273px] flex-col border border-[#979797] bg-[linear-gradient(90deg,#f1f1f1_28px,#e0e0e0_28px,#e0e0e0_29px,#ffffff_29px,#ffffff_30px,#f0f0f0_30px)] px-[3px] pt-[2px] pb-px shadow-[3px_3px_2px_rgba(0,0,0,0.5)]">
          <button role="menuitem" class="h-[22px] pl-[31px] text-left">Treibersoftware aktualisieren...</button>
          <button role="menuitem" class="h-[22px] pl-[31px] text-left">Deaktivieren</button>
          <button role="menuitem" class="h-[22px] pl-[31px] text-left">Deinstallieren</button>
          <hr class="my-[3px] ml-[27px] h-[2px] border-t border-b border-t-[#e0e0e0] border-b-white">
          <button role="menuitem" class="h-[22px] pl-[31px] text-left">Nach geänderter Hardware suchen</button>
          <hr class="mt-[3px] mb-[2px] ml-[27px] h-[2px] border-t border-b border-t-[#e0e0e0] border-b-white">
          <button role="menuitem" class="flex h-6 items-start border-[3px] border-[#fa3c30] bg-[linear-gradient(#f2f4f7,#e7edf6)] pl-7 text-left leading-4 font-bold">Eigenschaften</button>
        </div>
      </section>

      <aside class="w-[187px] shrink-0 border-t-2 border-r border-b border-l-2 border-t-[#73767a] border-r-[#dedede] border-b-[#dedede] border-l-[#73767a] bg-white" aria-label="Aktionen">
        <h2 class="h-[20px] border-b border-[#a0a0a0] bg-[#f0f0f0] pl-1 leading-[20px] font-bold">Aktionen</h2>
        <button class="mt-px flex h-[25px] w-full items-center justify-between bg-[linear-gradient(#b9cde5,#98b4d4)] pr-[7px] pl-[6px] text-[#1a2a42]">Geräte-Manager<svg class="h-[5px] w-[9px]" viewBox="0 0 9 5"><path d="M0 5h9L4.500 0z" fill="#000"/></svg></button>
        <button class="flex h-6 w-full items-center justify-between pr-2 pl-[30px]">Weitere Aktionen<svg class="h-[9px] w-[5px]" viewBox="0 0 5 9"><path d="M0 0v9l5-4.500z" fill="#000"/></svg></button>
      </aside>
    </main>

    <footer class="flex h-[23px] items-center border-t border-[#8c8c8c] bg-[#f0edec] pl-px">
      <p class="grow">Öffnet die Eigenschaften des aktuellen Objekts.</p>
      <span class="h-5 w-[133px] border-l border-[#d2d0cf]"></span>
      <span class="mr-[2px] h-5 w-[85px] border-x border-[#d2d0cf]"></span>
    </footer>
  </div>
</div>
</body>
</html>
